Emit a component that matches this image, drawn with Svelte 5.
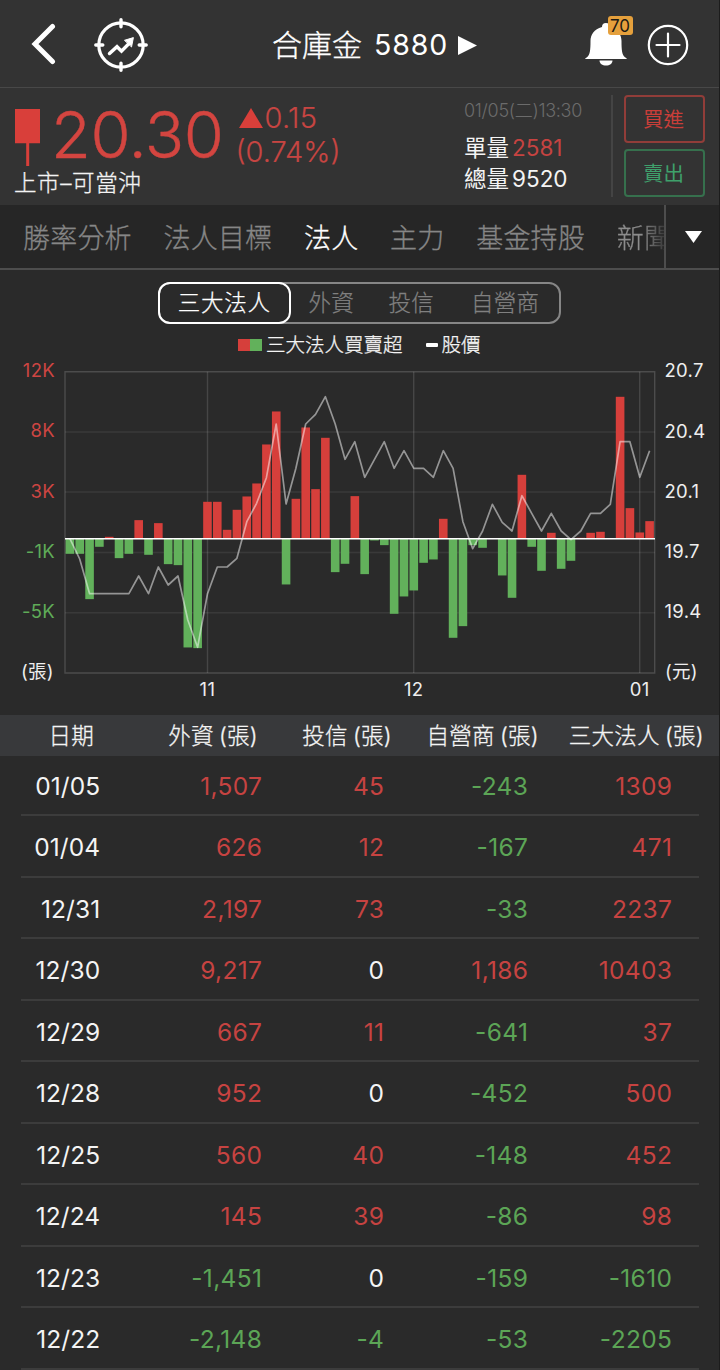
<script>
  const tabs = ['勝率分析', '法人目標', '法人', '主力', '基金持股', '新聞'];
  const segments = ['三大法人', '外資', '投信', '自營商'];
  const columns = ['外資', '投信', '自營商', '三大法人'];
  const rows = [
    ['01/05', '1,507', '45', '-243', '1309'],
    ['01/04', '626', '12', '-167', '471'],
    ['12/31', '2,197', '73', '-33', '2237'],
    ['12/30', '9,217', '0', '1,186', '10403'],
    ['12/29', '667', '11', '-641', '37'],
    ['12/28', '952', '0', '-452', '500'],
    ['12/25', '560', '40', '-148', '452'],
    ['12/24', '145', '39', '-86', '98'],
    ['12/23', '-1,451', '0', '-159', '-1610'],
    ['12/22', '-2,148', '-4', '-53', '-2205']
  ];
  const tone = (v) => (v === '0' ? '' : v.startsWith('-') ? 'down' : 'up');

  // Net volume per session in thirds of a pixel, positive upwards
  const volume = [
    -45, -45, -181, -24, 6, -58, -45, 56, -48, 47, -76, -79, -326, -328, 111, 111, 27, 87, 127, 166,
    283, 382, -137, 120, 334, 149, 303, -100, -75, 128, -106, -5, -19, -225, -173, -155, -72, -62, 60,
    -297, -262, -19, -27, 2, -110, -177, 192, -24, -96, 18, -90, -66, 3, 18, 21, 2, 426, 92, 19, 53
  ];
  const price = [
    551, 612, 716, 716, 716, 716, 716, 663, 716, 636, 690, 663, 795, 877, 716, 636, 636, 610, 500, 445,
    368, 207, 447, 340, 207, 178, 125, 207, 313, 260, 367, 313, 260, 340, 287, 340, 340, 367, 287, 340,
    500, 581, 528, 448, 502, 528, 422, 475, 528, 475, 528, 554, 528, 475, 475, 448, 260, 260, 367, 287
  ];
  const left = 65;
  const step = 9.825;
  const base = 182.8;
  const cx = (i) => left + step * (i + 0.5);
  const line = price.map((p, i) => `${cx(i).toFixed(1)},${(p / 3 - 1).toFixed(1)}`).join(' ');
  const leftAxis = [['12K', 21.3], ['8K', 81.3], ['3K', 141.5], ['-1K', 201.6], ['-5K', 261.6]];
  const rightAxis = ['20.7', '20.4', '20.1', '19.7', '19.4'];
  const months = [['11', 207.4], ['12', 413.6], ['01', 639.7]];
</script>

<div class="app">
  <header class="nav">
    <svg class="back" width="26" height="42" viewBox="0 0 26 42"><path d="M21.500 3.500 4 21l17.500 17.500" fill="none" stroke="#fff" stroke-width="5" stroke-linecap="round" stroke-linejoin="miter" /></svg>
    <svg class="target" width="56" height="56" viewBox="0 0 56 56" fill="none" stroke="#fff" stroke-linecap="round">
      <circle cx="28" cy="28" r="22.200" stroke-width="3.200" />
      <path d="M28 2.800v7M28 46.200v7M2.800 28h7M46.200 28h7" stroke-width="3.400" />
      <path d="m16.500 36.500 7.500-6.800 4.500 4.500 8-8.200" stroke-width="3.400" stroke-linejoin="miter" />
      <path d="m31.800 23.200 8.600-2.600-1.800 9z" fill="#fff" stroke-width="1" />
    </svg>
    <div class="title"><span class="name">合庫金</span><span class="code">5880</span><svg width="19" height="19" viewBox="0 0 19 19"><path d="M0 0 19 9.500 0 19z" fill="#fff" /></svg></div>
    <div class="bell">
      <svg width="44" height="46" viewBox="0 0 44 46" fill="#fff">
        <path d="M22 3a4 4 0 0 1 4 4C34 9 37.500 15 37.500 21c0 9 .500 14 3.500 16.200q1.300.8 2 1.800H1q.7-1 2-1.800C6 35 6.500 30 6.500 21 6.500 15 10 9 18 7a4 4 0 0 1 4-4z" />
        <path d="M15.500 40.500h13c0 3-2.800 5-6.500 5s-6.500-2-6.500-5z" />
      </svg>
      <span class="badge">70</span>
    </div>
    <svg class="add" width="42" height="42" viewBox="0 0 42 42" fill="none" stroke="#fff" stroke-width="2.200"><circle cx="21" cy="21" r="19.200" /><path d="M21 9.500v23M9.500 21h23" stroke-linecap="round" /></svg>
  </header>

  <section class="quote">
    <div class="main">
      <div class="figures">
        <svg class="candle" width="25" height="57" viewBox="0 0 25 57"><path d="M0 0h25v34.300H0zM11.200 34h3v23h-3z" fill="#d93f3a" /></svg>
        <div class="last">20.30</div>
        <div class="change">
          <div class="diff"><svg width="24" height="20" viewBox="0 0 24 20"><path d="M12 0 24 20H0z" fill="#d93f3a" /></svg><span>0.15</span></div>
          <div class="pct">(0.74%)</div>
        </div>
      </div>
      <div class="market">上市–可當沖</div>
    </div>
    <div class="totals">
      <div class="time">01/05(二)13:30</div>
      <div class="vol">單量<b class="up">2581</b></div>
      <div class="vol second">總量<b>9520</b></div>
    </div>
    <div class="trade">
      <div class="btn buy">買進</div>
      <div class="btn sell">賣出</div>
    </div>
  </section>

  <nav class="tabs">
    <div class="strip">
      {#each tabs as tab}
        <span class:active={tab === '法人'} class:fading={tab === '新聞'}>{tab}</span>
      {/each}
    </div>
    <div class="more"><svg width="17" height="12" viewBox="0 0 17 12"><path d="M0 0h17L8.500 12z" fill="#fff" /></svg></div>
  </nav>

  <div class="segments">
    {#each segments as s, i}
      <span class="seg s{i}">{s}</span>
    {/each}
  </div>

  <div class="legend">
    <i class="sw red"></i><i class="sw green"></i><span class="net">三大法人買賣超</span><i class="dash"></i><span>股價</span>
  </div>

  <svg class="chart" width="719" height="349" viewBox="0 0 719 349">
    <g stroke="#fff" stroke-width="1.400">
      <path d="M65 76h590M65 136h590M65 196.500h590M65 256.700h590" opacity=".07" />
      <path d="M207.500 15.700V317M413.700 15.700V317M639.700 15.700V317" opacity=".13" />
      <path d="M65 15.700h589.700V317H65z" fill="none" opacity=".16" />
    </g>
    {#each volume as v, i}
      <rect x={cx(i) - 4.300} width="8.600" y={v > 0 ? base - v / 3 : base} height={Math.abs(v) / 3} fill={v > 0 ? '#d63f3b' : '#62b15b'} />
    {/each}
    <path d="M65 182.800h590" stroke="#fff" stroke-width="1.600" />
    <polyline points={line} fill="none" stroke="#fff" stroke-opacity=".5" stroke-width="1.700" stroke-linejoin="round" />
    <g class="labels">
      {#each leftAxis as [label, y], i}
        <text x="55" y={y} text-anchor="end" fill={i < 3 ? '#cd4542' : '#5fab58'}>{label}</text>
      {/each}
      {#each rightAxis as label, i}
        <text x="664.500" y={21.4 + i * 60.100}>{label}</text>
      {/each}
      <text x="21" y="322.300">(張)</text>
      <text x="665" y="322.300">(元)</text>
      {#each months as [m, x]}
        <text {x} y="339.500" text-anchor="middle">{m}</text>
      {/each}
    </g>
  </svg>

  <div class="thead">
    <span>日期</span>
    {#each columns as c}<span>{c}<em>(張)</em></span>{/each}
  </div>
  <div class="tbody">
    {#each rows as row}
      <div class="row">
        {#each row as v, i}
          <span class={i === 0 ? 'date' : tone(v)}>{v}</span>
        {/each}
      </div>
    {/each}
  </div>
</div>

<style>
  :global(body) { background: #1c1c1c; }
  .app { width: 719px; height: 1370px; overflow: hidden; background: #2a2a2a; color: #f4f4f4; font-family: Inter, "Noto Sans CJK TC", sans-serif; font-weight: 400; }
  .app, .app * { box-sizing: border-box; }
  svg { display: block; flex: none; }
  i, em { font-style: normal; }
  b { font-weight: 400; }
  .up { color: #c64341; }
  .down { color: #5ca556; }

  .nav { height: 88px; background: #333; border-bottom: 1px solid #484848; display: flex; align-items: center; white-space: nowrap; }
  .back { margin-left: 31px; }
  .target { margin: 3px 0 0 35.500px; }
  .title { display: flex; align-items: center; width: 206px; margin: 3px 0 0 123.500px; font-size: 30px; line-height: 44px; color: #fff; font-weight: 300; }
  .name { -webkit-text-stroke: .35px currentColor; }
  .code { font-size: 28.500px; margin-left: 12px; letter-spacing: .9px; font-weight: 400; }
  .title svg { margin-left: 10px; }
  .bell { position: relative; margin: -1px 0 0 105.500px; }
  .badge { position: absolute; left: 24px; top: -4px; width: 25px; height: 19px; border-radius: 3px; background: #e5a03c; color: #1d1a14; font-size: 17px; line-height: 20px; text-align: center; }
  .add { margin: 2px 0 0 19px; }

  .quote { height: 117px; background: #333; display: flex; }
  .main { width: 464px; }
  .figures { display: flex; height: 81px; }
  .candle { margin: 21px 0 0 15px; }
  .last { margin: 12px 0 0 11px; width: 172.500px; font-size: 65px; line-height: 69px; letter-spacing: -.4px; font-weight: 300; -webkit-text-stroke: .4px currentColor; color: #d44540; white-space: nowrap; }
  .change { padding: 13px 0 0 12px; font-size: 29px; line-height: 34px; color: #c74542; font-weight: 300; -webkit-text-stroke: .2px currentColor; }
  .diff { display: flex; align-items: center; padding-left: 3px; }
  .diff span { margin-left: 2px; letter-spacing: .3px; }
  .market { padding-left: 14px; font-size: 22.500px; line-height: 28px; letter-spacing: .6px; font-weight: 300; -webkit-text-stroke: .3px currentColor; white-space: nowrap; }
  .totals { width: 147px; padding-top: 8px; white-space: nowrap; }
  .time { font-size: 18px; line-height: 29px; letter-spacing: -.3px; color: #6b6b6b; font-weight: 300; }
  .vol { font-size: 22.500px; line-height: 31px; margin-top: 6.500px; display: flex; }
  .vol.second { margin-top: 0; }
  .vol b { margin-left: 3px; }
  .trade { margin-top: 7px; height: 102px; padding-left: 11px; border-left: 2px solid #444; display: flex; flex-direction: column; gap: 6px; }
  .btn { width: 81px; height: 48px; border: 2px solid; border-radius: 4px; font-size: 20.500px; line-height: 46px; text-align: center; padding-right: 2px; }
  .buy { color: #c93e39; border-color: #913d39; }
  .sell { color: #3fa06b; border-color: #36704d; line-height: 45px; }

  .tabs { height: 65px; background: #262626; border-bottom: 2px solid #4d4d4d; display: flex; }
  .strip { width: 664px; padding-left: 23px; display: flex; align-items: center; gap: 31.700px; overflow: hidden; white-space: nowrap; font-size: 27px; color: #868686; font-weight: 300; letter-spacing: .2px; -webkit-text-stroke: .3px currentColor; }
  .active { color: #fff; }
  .fading { background: linear-gradient(90deg, #8c8c8c 45%, #2c2c2c 95%); background-clip: text; color: transparent; }
  .more { flex: 1; border-left: 2px solid #4d4d4d; display: flex; align-items: center; padding-left: 19px; }

  .segments { display: flex; width: 403px; height: 42px; margin: 11.500px 0 0 158px; border: 2px solid #868686; border-radius: 12px; font-size: 22.500px; line-height: 38px; color: #808080; font-weight: 300; -webkit-text-stroke: .25px currentColor; }
  .seg { text-align: center; width: 81px; letter-spacing: .3px; }
  .seg.s0 { width: 135px; margin: -2px 0 -2px -2px; border: 2px solid #fff; border-radius: 12px; color: #fff; letter-spacing: .7px; line-height: 38px; padding-right: 1px; }
  .seg.s3 { width: 109px; }

  .legend { display: flex; align-items: center; height: 32.500px; padding: 11px 0 0 238px; font-size: 19.500px; line-height: 22px; }
  .legend, .thead { font-weight: 300; -webkit-text-stroke: .3px currentColor; }
  .sw { width: 12px; height: 12px; }
  .red { background: #d63f3b; }
  .green { background: #62b15b; }
  .net { margin-left: 4px; }
  .dash { width: 12px; height: 4px; border-radius: 1px; background: #fff; margin: 0 3.500px 0 23.500px; }

  .labels { font-size: 18.500px; letter-spacing: .3px; fill: #eee; }

  .thead { height: 41px; margin-top: 10px; background: #38393b; display: grid; grid-template-columns: 94px 164px 134px 147px 165px; text-align: right; font-size: 22.500px; line-height: 41px; letter-spacing: .3px; white-space: nowrap; }
  .thead em { margin-left: 5px; }
  .tbody { padding: 0 20px 0 21px; margin-top: -1.500px; }
  .row { height: 61.500px; border-bottom: 2px solid #3c3c3c; display: grid; grid-template-columns: 79.300px 162px 122px 144px 144px; text-align: right; font-size: 24.500px; line-height: 63px; letter-spacing: .35px; }
  .date { letter-spacing: .1px; }
</style>
